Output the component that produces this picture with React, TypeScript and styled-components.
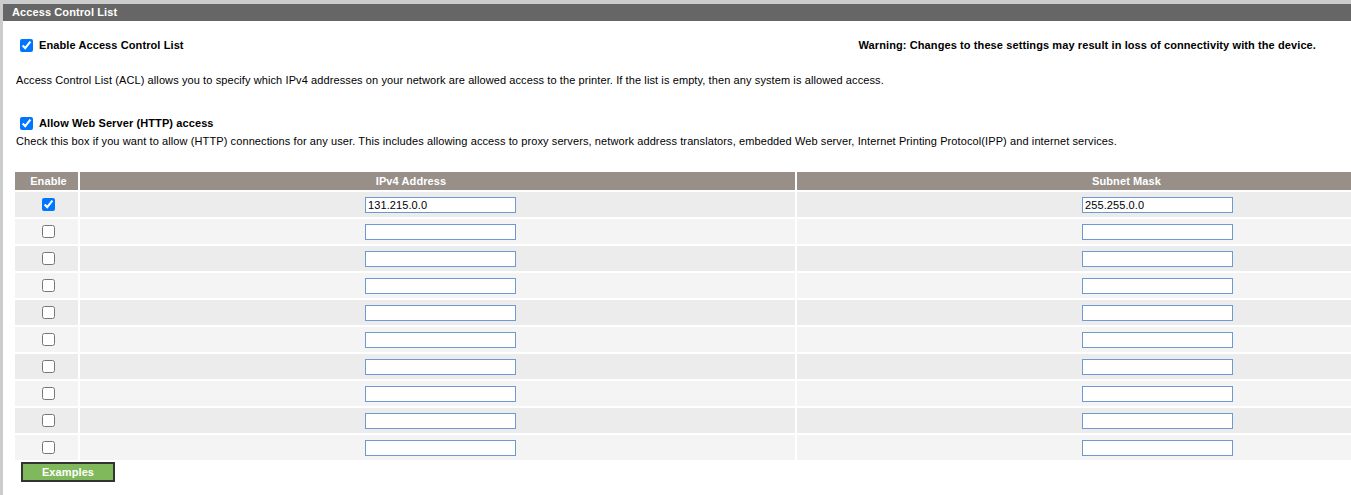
import styled, { createGlobalStyle } from "styled-components";

const GlobalStyle = createGlobalStyle`
  html, body {
    margin: 0;
    padding: 0;
    overflow: hidden;
    background: #ffffff;
  }
  body {
    font-family: "Liberation Sans", Arial, sans-serif;
    font-size: 11px;
    letter-spacing: 0.1px;
    color: #000;
  }
`;

const Page = styled.div`
  min-height: 100vh;
  border-top: 4px solid #cccccc;
  border-left: 3px solid #cccccc;
  box-sizing: border-box;
  overflow: hidden;
`;

const TitleBar = styled.div`
  height: 17px;
  background: #666666;
  color: #ffffff;
  font-weight: bold;
  font-size: 11px;
  line-height: 17px;
  padding-left: 9px;
`;

const Content = styled.div`
  padding: 0 35px 0 13px;
`;

const TopRow = styled.div`
  display: flex;
  justify-content: space-between;
  align-items: center;
  height: 20px;
  margin-top: 14px;
`;

const CheckLabel = styled.label`
  display: flex;
  align-items: center;
  gap: 6px;
  font-weight: bold;
  padding-left: 4px;
`;

const Check = styled.input.attrs({ type: "checkbox" })`
  width: 13px;
  height: 13px;
  margin: 0;
`;

const Warning = styled.div`
  font-weight: bold;
`;

type TextProps = { $top: number };

const Para = styled.p<TextProps>`
  margin: ${(p) => p.$top}px 0 0;
  line-height: 14px;
`;

const OptionRow = styled.div<TextProps>`
  display: flex;
  align-items: center;
  height: 20px;
  margin-top: ${(p) => p.$top}px;
`;

const Table = styled.table`
  margin: 22px 0 0 -3px;
  border-spacing: 2px;
  table-layout: fixed;
  width: 1501px;
`;

type HeadProps = { $shift: number };

const Head = styled.th<HeadProps>`
  background: #978f88;
  color: #ffffff;
  font-weight: bold;
  font-size: 11px;
  height: 18px;
  padding: 0 ${(p) => (p.$shift < 0 ? -p.$shift : 0)}px 0 ${(p) => (p.$shift > 0 ? p.$shift : 0)}px;
  text-align: center;
`;

type RowProps = { $odd: boolean };

const Row = styled.tr<RowProps>`
  background: ${(p) => (p.$odd ? "#ececec" : "#f4f4f4")};
`;

const CheckCell = styled.td`
  height: 25px;
  padding: 0 0 0 4px;
  text-align: center;
  vertical-align: middle;
  line-height: 0;
`;

const InputCell = styled.td`
  height: 25px;
  padding: 0 0 0 6px;
  text-align: center;
  vertical-align: middle;
  line-height: 0;
`;

const AddrInput = styled.input`
  width: 151px;
  height: 16px;
  box-sizing: border-box;
  border: 1px solid #6e9ad2;
  padding: 0 2px;
  font-family: "Liberation Sans", Arial, sans-serif;
  font-size: 11px;
  letter-spacing: 0.1px;
  color: #000;
  background: #fff;
  outline: none;
`;

const ExamplesButton = styled.button`
  display: block;
  width: 94px;
  height: 20px;
  margin: 0 0 0 5px;
  background: #80b95b;
  border: 2px solid #333333;
  color: #ffffff;
  font-family: "Liberation Sans", Arial, sans-serif;
  font-size: 11px;
  font-weight: bold;
  letter-spacing: 0.1px;
  padding: 0;
`;

const entries = [
  { on: true, ip: "131.215.0.0", mask: "255.255.0.0" },
  ...Array.from({ length: 9 }, () => ({ on: false, ip: "", mask: "" })),
];

export default function App() {
  return (
    <Page>
      <GlobalStyle />
      <TitleBar>Access Control List</TitleBar>
      <Content>
        <TopRow>
          <CheckLabel>
            <Check defaultChecked />
            Enable Access Control List
          </CheckLabel>
          <Warning>Warning: Changes to these settings may result in loss of connectivity with the device.</Warning>
        </TopRow>
        <Para $top={18}>
          Access Control List (ACL) allows you to specify which IPv4 addresses on your network are allowed access to the printer. If the list is empty, then any system is allowed access.
        </Para>
        <OptionRow $top={26}>
          <CheckLabel>
            <Check defaultChecked />
            Allow Web Server (HTTP) access
          </CheckLabel>
        </OptionRow>
        <Para $top={1}>
          Check this box if you want to allow (HTTP) connections for any user. This includes allowing access to proxy servers, network address translators, embedded Web server, Internet Printing Protocol(IPP) and internet services.
        </Para>
        <Table>
          <colgroup>
            <col style={{ width: 63 }} />
            <col style={{ width: 715 }} />
            <col style={{ width: 715 }} />
          </colgroup>
          <thead>
            <tr>
              <Head $shift={4}>Enable</Head>
              <Head $shift={-53}>IPv4 Address</Head>
              <Head $shift={-56}>Subnet Mask</Head>
            </tr>
          </thead>
          <tbody>
            {entries.map((e, i) => (
              <Row key={i} $odd={i % 2 === 0}>
                <CheckCell>
                  <Check defaultChecked={e.on} />
                </CheckCell>
                <InputCell>
                  <AddrInput defaultValue={e.ip} />
                </InputCell>
                <InputCell>
                  <AddrInput defaultValue={e.mask} />
                </InputCell>
              </Row>
            ))}
          </tbody>
        </Table>
        <ExamplesButton>Examples</ExamplesButton>
      </Content>
    </Page>
  );
}
